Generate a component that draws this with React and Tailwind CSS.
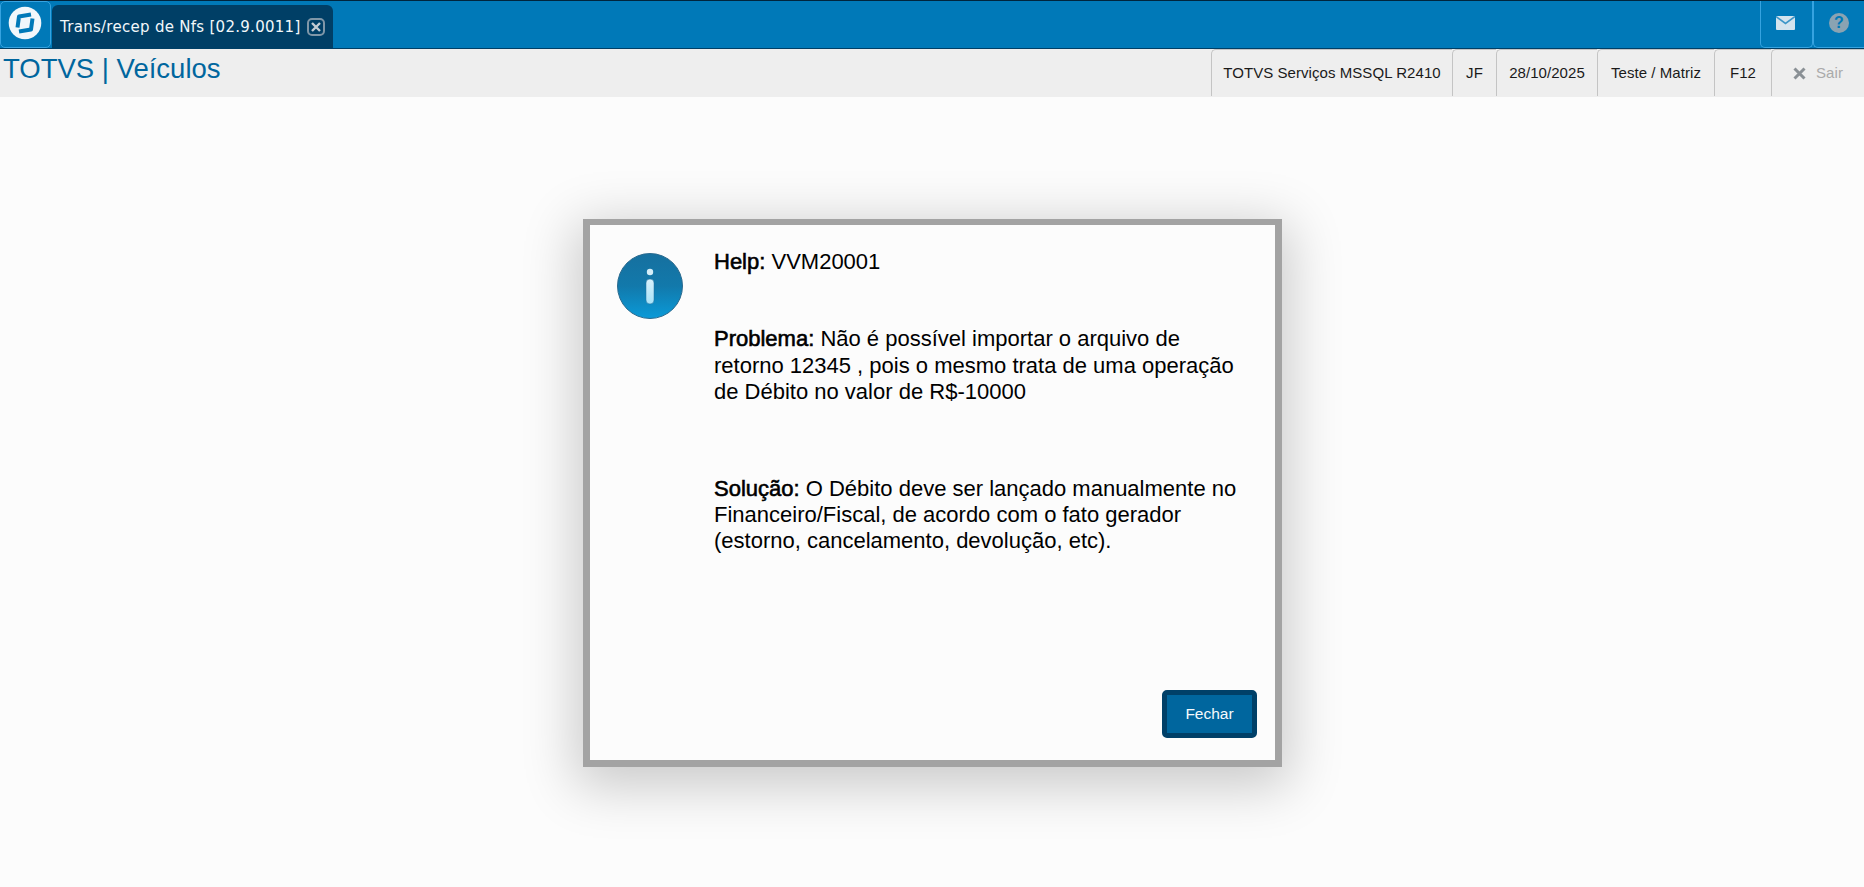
function Item({ children, w, muted }) {
  return (
    <div className={`h-[47px] flex items-center justify-center border-l border-t border-[#c4c4c4] rounded-tl-[5px] text-[15px] tracking-[0.06px] ${muted ? "text-[#aaaaaa]" : "text-[#1a1a1a]"} ${w}`}>
      {children}
    </div>
  );
}

function Logo() {
  return (
    <svg width="34" height="34" viewBox="0 0 34 34" className="-ml-[2px] -mt-[3px]">
      <circle cx="17" cy="17" r="16.3" fill="#f1f7fb" />
      <path d="M23 8.5 L11 10.5 L9.5 21.5" fill="none" stroke="#0079b8" strokeWidth="4" strokeLinejoin="round" />
      <path d="M11 25.5 L23 23.5 L24.5 12.5" fill="none" stroke="#0079b8" strokeWidth="4" strokeLinejoin="round" />
    </svg>
  );
}

const Strong = ({ children }) => (
  <span className="[-webkit-text-stroke:0.6px_black]">{children}</span>
);

export default function App() {
  return (
    <div className="w-[1864px] h-[887px] flex flex-col bg-[#fcfcfc] overflow-hidden font-['Liberation_Sans',Arial,sans-serif]">
      <header className="h-[49px] shrink-0 flex justify-between bg-[#0079b8] border-t border-t-[#00253d] border-b border-b-[#003f66]">
        <div className="flex items-end">
          <div className="w-[51px] h-[47px] flex items-center justify-center border border-[#36a3e0] rounded-[5px] bg-[#0079b8]">
            <Logo />
          </div>
          <div className="ml-[1px] w-[281px] h-[43px] flex items-center pl-[8px] bg-[#003f66] rounded-t-[6px]">
            <span className="font-['DejaVu_Sans',sans-serif] text-[15px] text-[#f2f7fa] whitespace-nowrap tracking-[0.28px] pt-[1px]">Trans/recep de Nfs [02.9.0011]</span>
            <span className="ml-[6px] w-[18px] h-[18px] flex items-center justify-center border-2 border-[#7f97a8] rounded-[5px]">
              <svg width="10" height="10" viewBox="0 0 10 10">
                <path d="M1 1L9 9M9 1L1 9" stroke="#c3ccd3" strokeWidth="2.4" />
              </svg>
            </span>
          </div>
        </div>
        <div className="flex items-stretch">
          <div className="w-[53px] flex items-center justify-center pr-[3px] pb-[2px] border border-t-0 border-[#36a3e0] rounded-b-[5px]">
            <svg width="19" height="14" viewBox="0 0 19 14">
              <rect x="0" y="0" width="19" height="14" rx="1" fill="#d4e4ee" />
              <path d="M0 0.5 L9.5 7.5 L19 0.5" fill="none" stroke="#3d96c8" strokeWidth="1.6" />
            </svg>
          </div>
          <div className="w-[51px] flex items-center justify-center pb-[2px] border border-t-0 border-r-0 border-[#36a3e0] rounded-bl-[5px]">
            <span className="w-[20px] h-[20px] rounded-full bg-[#8aa3b2] flex items-center justify-center text-[#0079b8] text-[16px] font-bold leading-none">?</span>
          </div>
        </div>
      </header>

      <div className="h-[48px] shrink-0 flex justify-between bg-[#eeeeee]">
        <div className="pl-[3px] pt-[4px] text-[27.5px] leading-[32px] text-[#00669e]">TOTVS | Veículos</div>
        <div className="flex items-start">
          <Item w="w-[241px]">TOTVS Serviços MSSQL R2410</Item>
          <Item w="w-[44px]">JF</Item>
          <Item w="w-[101px]">28/10/2025</Item>
          <Item w="w-[117px]">Teste / Matriz</Item>
          <Item w="w-[57px]">F12</Item>
          <Item w="w-[93px]" muted>
            <svg width="13" height="13" viewBox="0 0 13 13" className="mr-[10px]">
              <path d="M1.5 1.5L11.5 11.5M11.5 1.5L1.5 11.5" stroke="#8a9095" strokeWidth="3" />
            </svg>
            Sair
          </Item>
        </div>
      </div>

      <main className="flex-1 flex justify-center items-start pt-[122px] pl-[1px]">
        <div className="w-[699px] h-[548px] border-[7px] border-t-[6px] border-[#a3a3a3] bg-[#fcfcfc] shadow-[0_12px_50px_8px_rgba(0,0,0,0.2)] flex flex-col">
          <div className="flex flex-1 pt-[28px] pl-[27px]">
            <svg width="66" height="66" viewBox="0 0 66 66" className="shrink-0">
              <defs>
                <linearGradient id="infoG" x1="0" y1="0" x2="0" y2="1">
                  <stop offset="0" stopColor="#16709f" />
                  <stop offset="0.5" stopColor="#1279ab" />
                  <stop offset="1" stopColor="#0a9ad8" />
                </linearGradient>
                <linearGradient id="infoBar" x1="0" y1="0" x2="0" y2="1">
                  <stop offset="0" stopColor="#d8f1fb" />
                  <stop offset="1" stopColor="#a8e2f8" />
                </linearGradient>
              </defs>
              <circle cx="33" cy="33" r="32.5" fill="url(#infoG)" stroke="#2b6a8e" strokeWidth="1" />
              <circle cx="33" cy="19" r="3.2" fill="#d5eef9" />
              <rect x="29" y="26" width="8" height="25" rx="4" fill="url(#infoBar)" stroke="#1f6f9c" strokeWidth="0.5" />
            </svg>
            <div className="ml-[31px] w-[530px] -mt-[4px] text-[22px] leading-[26.4px] text-black">
              <p><Strong>Help:</Strong> VVM20001</p>
              <p className="mt-[51px]"><Strong>Problema:</Strong> Não é possível importar o arquivo de<br />retorno 12345 , pois o mesmo trata de uma operação<br />de Débito no valor de R$-10000</p>
              <p className="mt-[70px]"><Strong>Solução:</Strong> O Débito deve ser lançado manualmente no<br />Financeiro/Fiscal, de acordo com o fato gerador<br />(estorno, cancelamento, devolução, etc).</p>
            </div>
          </div>
          <div className="flex justify-end pr-[18px] pb-[22px]">
            <button className="w-[95px] h-[48px] border-[5px] border-[#004068] rounded-[5px] bg-[#00669e] text-[#f4f9fc] text-[15.5px]">Fechar</button>
          </div>
        </div>
      </main>
    </div>
  );
}
